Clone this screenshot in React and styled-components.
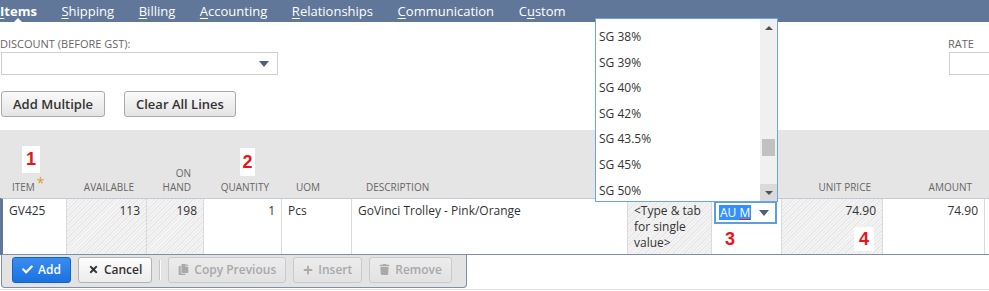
import React from "react";
import styled, { createGlobalStyle, css } from "styled-components";
import { FaCheck, FaTimes, FaCopy, FaPlus, FaTrash } from "react-icons/fa";

const tabs = [
  { label: "Items", key: 0, active: true },
  { label: "Shipping", key: 0 },
  { label: "Billing", key: 0 },
  { label: "Accounting", key: 0 },
  { label: "Relationships", key: 0 },
  { label: "Communication", key: 0 },
  { label: "Custom", key: 1 }
];

const columns = "64px 80px 57px 78px 70px 276px 84px 70px 101px 102px 1fr";

const headers = [
  { label: "Item", align: "left", pad: "0 0 4px 9px", required: true },
  { label: "Available", align: "right" },
  { label: ["On", "Hand"], align: "right" },
  { label: "Quantity", align: "right" },
  { label: "UOM", align: "left", pad: "0 0 4px 14px" },
  { label: "Description", align: "left", pad: "0 0 4px 14px" },
  { label: "", align: "left" },
  { label: "", align: "left" },
  { label: "Unit Price", align: "right", pad: "0 12px 4px 0" },
  { label: "Amount", align: "right" },
  { label: "", align: "left" }
];

const options = ["SG 38%", "SG 39%", "SG 40%", "SG 42%", "SG 43.5%", "SG 45%", "SG 50%"];

const markers = [
  { n: 1, x: 22, y: 146, w: 18, h: 27 },
  { n: 2, x: 240, y: 148, w: 15, h: 28 },
  { n: 3, x: 723, y: 229, w: 14, h: 20 },
  { n: 4, x: 854, y: 227, w: 20, h: 24 }
];

const GlobalStyle = createGlobalStyle`
  html, body {
    margin: 0;
    padding: 0;
    background: #fff;
  }
  body {
    font-family: "Open Sans", "Liberation Sans", sans-serif;
    color: #333;
  }
  * {
    box-sizing: border-box;
  }
`;

const hatch = css`
  background-color: #f2f2f2;
  background-image: repeating-linear-gradient(
    135deg,
    #e8e8e8 0 1px,
    #f4f4f4 1px 2.5px
  );
`;

const App = () => {
  return (
    <>
      <GlobalStyle />
      <Page>
        <TabBar>
          {tabs.map(t => (
            <Tab key={t.label} $active={t.active}>
              {t.label.slice(0, t.key)}
              <u>{t.label[t.key]}</u>
              {t.label.slice(t.key + 1)}
            </Tab>
          ))}
        </TabBar>

        <Fields>
          <Field $width={278}>
            <Label>Discount (Before GST):</Label>
            <SelectBox $width={277}>
              <Arrow />
            </SelectBox>
          </Field>
          <Field $width={41}>
            <Label>Rate</Label>
            <SelectBox $width={120} />
          </Field>
        </Fields>

        <ButtonRow>
          <Button>Add Multiple</Button>
          <Button>Clear All Lines</Button>
        </ButtonRow>

        <Machine>
          <HeaderRow>
            {headers.map((h, i) => (
              <HeadCell key={i} $align={h.align} $pad={h.pad}>
                {Array.isArray(h.label)
                  ? h.label.map(l => <span key={l}>{l}</span>)
                  : (
                    <span>
                      {h.label}
                      {h.required && <Star>*</Star>}
                    </span>
                  )}
              </HeadCell>
            ))}
          </HeaderRow>

          <DataRow>
            <Cell>GV425</Cell>
            <Cell $align="right" $hatch>113</Cell>
            <Cell $align="right" $hatch>198</Cell>
            <Cell $align="right">1</Cell>
            <Cell>Pcs</Cell>
            <Cell>GoVinci Trolley - Pink/Orange</Cell>
            <Cell $hatch>
              &lt;Type &amp; tab
              <br />
              for single
              <br />
              value&gt;
            </Cell>
            <Cell $flush>
              <FocusSelect>
                <Selected>
                  AU <Misspelt>M</Misspelt>
                </Selected>
                <Arrow />
              </FocusSelect>
            </Cell>
            <Cell $align="right" $hatch>74.90</Cell>
            <Cell $align="right">74.90</Cell>
            <Cell $last />
          </DataRow>

          <Toolbar>
            <ToolButton $variant="primary">
              <FaCheck size={11} />
              Add
            </ToolButton>
            <ToolButton>
              <FaTimes size={11} />
              Cancel
            </ToolButton>
            <Separator />
            <ToolButton $variant="disabled">
              <FaCopy size={11} />
              Copy Previous
            </ToolButton>
            <ToolButton $variant="disabled">
              <FaPlus size={10} />
              Insert
            </ToolButton>
            <ToolButton $variant="disabled">
              <FaTrash size={11} />
              Remove
            </ToolButton>
          </Toolbar>
        </Machine>
        <BottomRule />

        <Dropdown>
          <OptionList>
            {options.map(o => (
              <Option key={o}>{o}</Option>
            ))}
          </OptionList>
          <Scrollbar>
            <ScrollButton>
              <Tri $up />
            </ScrollButton>
            <Track>
              <Thumb $offset={103} />
            </Track>
            <ScrollButton $pressed>
              <Tri />
            </ScrollButton>
          </Scrollbar>
        </Dropdown>

        {markers.map(m => (
          <Marker key={m.n} $x={m.x} $y={m.y} $w={m.w} $h={m.h}>
            {m.n}
          </Marker>
        ))}
      </Page>
    </>
  );
};

const Page = styled.div`
  position: relative;
  width: 989px;
  height: 291px;
  overflow: hidden;
  background: #fff;
`;

const TabBar = styled.nav`
  display: flex;
  align-items: center;
  gap: 24.6px;
  height: 22px;
  background: #607799;
`;

const Tab = styled.span`
  position: relative;
  color: #fff;
  font-size: 13px;
  line-height: 22px;
  font-weight: ${p => (p.$active ? 700 : 400)};
  white-space: nowrap;

  u {
    text-decoration-thickness: 1px;
    text-underline-offset: 2px;
  }

  ${p =>
    p.$active &&
    css`
      &::after {
        content: "";
        position: absolute;
        left: 50%;
        bottom: 0;
        margin-left: -4px;
        border: 4px solid transparent;
        border-top: 0;
        border-bottom-color: #fff;
      }
    `}
`;

const Fields = styled.div`
  display: flex;
  justify-content: space-between;
  padding-top: 15px;
`;

const Field = styled.div`
  display: flex;
  flex-direction: column;
  gap: 1px;
  flex: 0 0 ${p => p.$width}px;
  min-width: 0;
`;

const Label = styled.label`
  font-size: 11px;
  line-height: 14px;
  color: #666;
  text-transform: uppercase;
  white-space: nowrap;
`;

const SelectBox = styled.div`
  display: flex;
  align-items: center;
  justify-content: flex-end;
  flex-shrink: 0;
  width: ${p => p.$width}px;
  height: 23px;
  margin-left: 1px;
  padding-right: 8px;
  border: 1px solid #cfcfcf;
  background: #fff;
`;

const Arrow = styled.span`
  width: 0;
  height: 0;
  border-left: 5px solid transparent;
  border-right: 5px solid transparent;
  border-top: 6px solid #4d5f7a;
`;

const ButtonRow = styled.div`
  display: flex;
  gap: 19px;
  padding: 16px 0 0 1px;
`;

const Button = styled.button`
  height: 26px;
  padding: 0 11px;
  font-family: inherit;
  font-size: 13px;
  font-weight: 600;
  color: #333;
  border: 1px solid #aaa;
  border-radius: 3px;
  background: linear-gradient(#fafafa, #e4e4e4);
`;

const Machine = styled.section`
  margin-top: 13px;
`;

const HeaderRow = styled.div`
  display: grid;
  grid-template-columns: ${columns};
  height: 68px;
  padding-left: 3px;
  background: #e5e5e5;
`;

const HeadCell = styled.div`
  display: flex;
  flex-direction: column;
  justify-content: flex-end;
  align-items: ${p => (p.$align === "right" ? "flex-end" : "flex-start")};
  padding: ${p => p.$pad || "0 13px 4px 0"};
  font-size: 10px;
  line-height: 14px;
  color: #666;
  text-transform: uppercase;
  white-space: nowrap;
`;

const Star = styled.span`
  color: #e39a2d;
  font-size: 14px;
  margin-left: 2px;
  position: relative;
  top: -3px;
`;

const DataRow = styled.div`
  display: grid;
  grid-template-columns: ${columns};
  height: 57px;
  border-left: 3px solid #607799;
  border-top: 1px solid #c3cbd8;
  border-bottom: 1px solid #7f8fab;
`;

const Cell = styled.div`
  padding: ${p => (p.$flush ? "2px 4px 0 2px" : "4px 6px 0 6px")};
  font-size: 12px;
  line-height: 16px;
  color: #333;
  text-align: ${p => p.$align || "left"};
  border-right: ${p => (p.$last ? "none" : "1px solid #dadada")};
  white-space: nowrap;
  ${p => p.$hatch && hatch}
`;

const FocusSelect = styled.div`
  display: flex;
  align-items: center;
  justify-content: space-between;
  height: 23px;
  padding: 0 6px 0 3px;
  border: 2px solid #5d9de3;
  background: #fff;
`;

const Selected = styled.span`
  background: #3390ff;
  color: #fff;
  font-size: 12px;
  line-height: 15px;
  padding: 0 1px;
`;

const Misspelt = styled.span`
  text-decoration: underline #e0201c;
  text-decoration-thickness: 1px;
  text-underline-offset: 2px;
`;

const Toolbar = styled.div`
  display: flex;
  align-items: center;
  gap: 7px;
  width: 466px;
  height: 33px;
  margin-left: 1px;
  padding: 0 0 3px 10px;
  background: #e3e3e3;
  border: 1px solid #7f8fab;
  border-top: none;
  border-radius: 0 0 4px 4px;
`;

const variants = {
  primary: css`
    color: #fff;
    border-color: #1463c8;
    background: linear-gradient(#3a8cf0, #1a72e0);
  `,
  default: css`
    color: #333;
    border-color: #b3b3b3;
    background: linear-gradient(#fdfdfd, #ececec);
  `,
  disabled: css`
    color: #a9a9a9;
    border-color: #cacaca;
    background: linear-gradient(#ececec, #e2e2e2);
  `
};

const ToolButton = styled.button`
  display: flex;
  align-items: center;
  gap: 5px;
  height: 26px;
  padding: 0 9px;
  font-family: inherit;
  font-size: 12px;
  font-weight: 600;
  white-space: nowrap;
  border: 1px solid;
  border-radius: 3px;
  ${p => variants[p.$variant || "default"]}
`;

const Separator = styled.span`
  width: 2px;
  height: 20px;
  border-left: 1px solid #c4c4c4;
  border-right: 1px solid #fafafa;
`;

const BottomRule = styled.div`
  margin-top: 1px;
  border-top: 1px solid #e3e3e3;
`;

const Dropdown = styled.div`
  position: absolute;
  left: 595px;
  top: 18px;
  width: 183px;
  height: 184px;
  display: flex;
  border: 1px solid #6aa6e4;
  background: #fff;
  z-index: 2;
`;

const OptionList = styled.ul`
  flex: 1;
  margin: 0;
  padding: 5px 0 0 3px;
  list-style: none;
`;

const Option = styled.li`
  height: 25.6px;
  line-height: 25.6px;
  font-size: 12px;
  color: #333;
`;

const Scrollbar = styled.div`
  display: flex;
  flex-direction: column;
  width: 17px;
  background: #f0f0f0;
`;

const ScrollButton = styled.div`
  display: flex;
  align-items: center;
  justify-content: center;
  height: 17px;
  background: ${p => (p.$pressed ? "#dadada" : "transparent")};
`;

const Tri = styled.span`
  width: 0;
  height: 0;
  border-left: 4px solid transparent;
  border-right: 4px solid transparent;
  ${p =>
    p.$up
      ? css`border-bottom: 4px solid #505050;`
      : css`border-top: 4px solid #505050;`}
`;

const Track = styled.div`
  flex: 1;
  padding: 0 2px;
`;

const Thumb = styled.div`
  height: 17px;
  margin-top: ${p => p.$offset}px;
  background: #c1c1c1;
`;

const Marker = styled.span`
  position: absolute;
  left: ${p => p.$x}px;
  top: ${p => p.$y}px;
  width: ${p => p.$w}px;
  height: ${p => p.$h}px;
  display: flex;
  align-items: center;
  justify-content: center;
  background: #fff;
  color: #e8141a;
  font-family: "Liberation Sans", Arial, sans-serif;
  font-size: 18px;
  font-weight: 700;
`;

export default App;
